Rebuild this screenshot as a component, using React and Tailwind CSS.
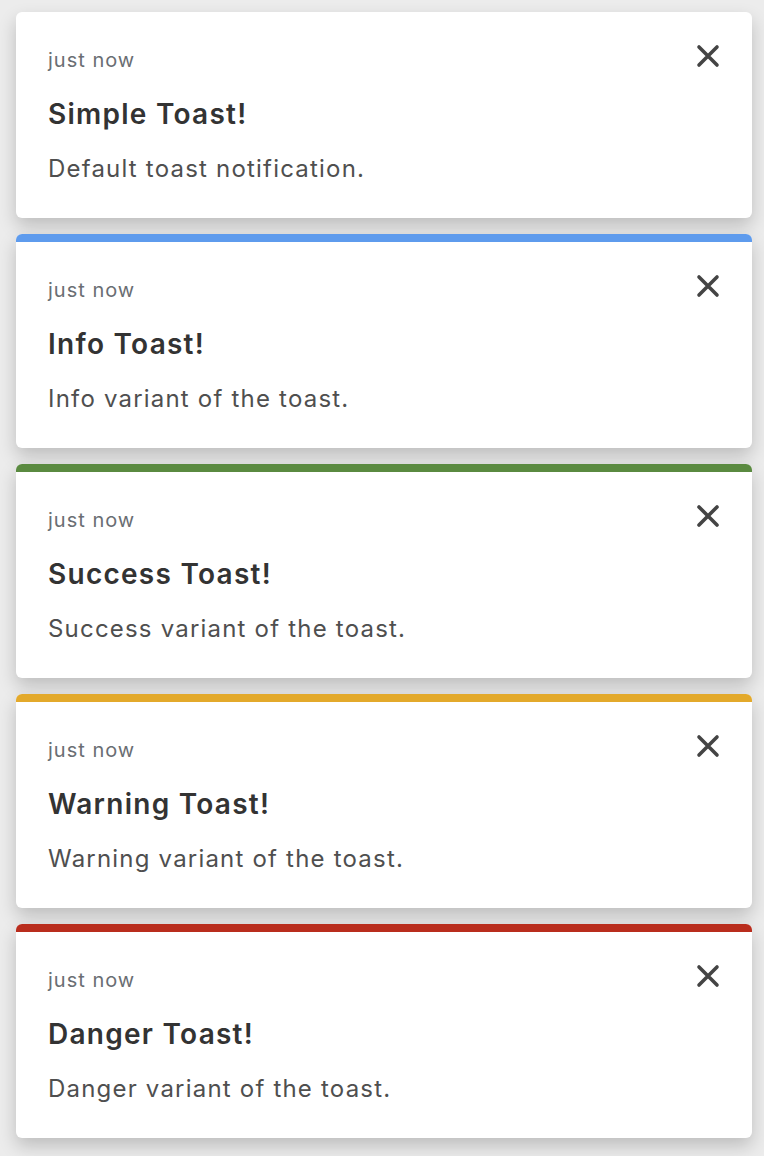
import React from 'react';

const toasts = [
  { title: 'Simple Toast!', body: 'Default toast notification.', bar: null },
  { title: 'Info Toast!', body: 'Info variant of the toast.', bar: 'bg-[#5e9bed]' },
  { title: 'Success Toast!', body: 'Success variant of the toast.', bar: 'bg-[#5a8a40]' },
  { title: 'Warning Toast!', body: 'Warning variant of the toast.', bar: 'bg-[#e3a92b]' },
  { title: 'Danger Toast!', body: 'Danger variant of the toast.', bar: 'bg-[#b92d1d]' },
];

const CloseIcon = () => (
  <svg width="24" height="24" viewBox="0 0 24 24" className="text-[#444]">
    <path d="M3 3 L21 21 M21 3 L3 21" stroke="currentColor" strokeWidth="3.6" strokeLinecap="round" fill="none" />
  </svg>
);

const Toast = ({ title, body, bar }) => (
  <div className="bg-white rounded-[6px] overflow-hidden shadow-[0_8px_18px_rgba(0,0,0,0.2)]">
    {bar && <div className={`h-2 ${bar}`} />}
    <div className="px-8 pt-8 pb-[33px]">
      {/* Zaman ve kapat */}
      <div className="flex justify-between items-start">
        <span className="text-[20px] leading-[32px] tracking-[0.05em] text-[#6a6e73]">just now</span>
        <button type="button">
          <CloseIcon />
        </button>
      </div>
      <div className="mt-[20px] text-[28px] leading-[36px] font-semibold tracking-[0.045em] text-[#333]">{title}</div>
      <div className="mt-[21px] text-[24px] leading-[32px] tracking-[0.05em] text-[#4f4f4f]">{body}</div>
    </div>
  </div>
);

export default function App() {
  return (
    <div
      className="min-h-[1156px] bg-[#ececec] pl-4 pr-3 pt-3 pb-4 flex flex-col gap-4"
      style={{ fontFamily: 'Inter, "Open Sans", sans-serif' }}
    >
      {toasts.map(t => (
        <Toast key={t.title} {...t} />
      ))}
    </div>
  );
}
